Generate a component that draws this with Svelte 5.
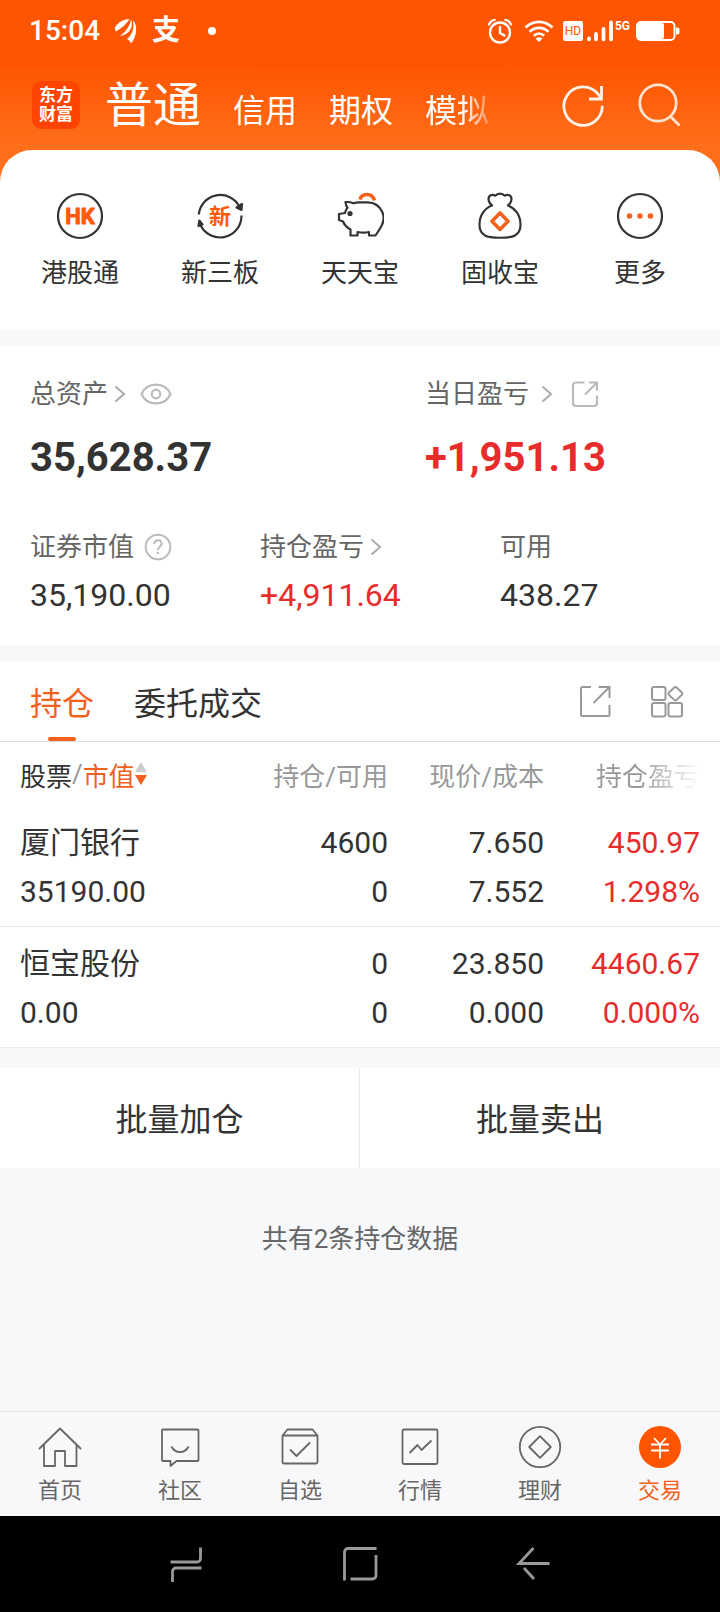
<script lang="ts">
  interface Holding {
    name: string;
    value: string;
    held: string;
    available: string;
    price: string;
    cost: string;
    profit: string;
    rate: string;
  }

  const accounts = ['普通', '信用', '期权', '模拟'];
  const shortcuts = [
    { id: 'hk', label: '港股通' },
    { id: 'neeq', label: '新三板' },
    { id: 'pig', label: '天天宝' },
    { id: 'bag', label: '固收宝' },
    { id: 'more', label: '更多' },
  ];
  const tabs = ['持仓', '委托成交'];
  const holdings: Holding[] = [
    { name: '厦门银行', value: '35190.00', held: '4600', available: '0', price: '7.650', cost: '7.552', profit: '450.97', rate: '1.298%' },
    { name: '恒宝股份', value: '0.00', held: '0', available: '0', price: '23.850', cost: '0.000', profit: '4460.67', rate: '0.000%' },
  ];
  const navItems = [
    { id: 'home', label: '首页' },
    { id: 'community', label: '社区' },
    { id: 'watchlist', label: '自选' },
    { id: 'market', label: '行情' },
    { id: 'wealth', label: '理财' },
    { id: 'trade', label: '交易' },
  ];

  let account = $state('普通');
  let tab = $state('持仓');
  let page = $state('trade');
</script>

{#snippet chevron()}
  <svg class="chevron" width="12" height="18" viewBox="0 0 12 18"><path d="M1.500 1.500 10 9l-8.500 7.500" /></svg>
{/snippet}

<div class="app">
  <div class="hero">
    <div class="status">
      <span class="clock">15:04</span>
      <svg class="wing" width="24" height="26" viewBox="0 0 24 26" fill="#fff">
        <path d="M1 9.500C4 4 9 1.500 15.500 1 12 6.500 8 10 2 13.500 1 12.500.8 11 1 9.500z" />
        <path d="M6 18C12 13.500 16 8 17 1.200c2 5.300.5 10-3 13.300C12 16.300 9 17.800 6 18z" />
        <path d="M13 21c5.500-4.500 7.500-11 6-19 3 3.500 3.800 8 2.800 13-.7 4-2.300 7.500-4.800 10.500C16.300 23.500 15 22 13 21z" />
      </svg>
      <span class="pay">支</span>
      <span class="dot"></span>
      <div class="system">
        <svg class="alarm" width="26" height="26" viewBox="0 0 26 26" fill="none" stroke="#fff" stroke-width="2.300" stroke-linecap="round">
          <circle cx="13" cy="14.500" r="10" />
          <path d="M13 9v6l4.500 2.500M2 6.500C3 4 5 2.300 7.500 1.800M24 6.500C23 4 21 2.300 18.500 1.800" />
        </svg>
        <svg class="wifi" width="30" height="24" viewBox="0 0 30 24" fill="none" stroke="#fff" stroke-width="2.800">
          <path d="M1.500 8.500C9.500 1 20.500 1 28.500 8.500M5.500 12.800c5.500-5.300 13.500-5.300 19 0M9.800 16.800c3.200-3 7.200-3 10.400 0" />
          <path d="M11.500 19.500 15 23l3.500-3.500c-2-1.600-5-1.600-7 0z" fill="#fff" stroke="none" />
        </svg>
        <span class="hd">HD</span>
        <svg class="signal" width="28" height="22" viewBox="0 0 28 22" stroke="#fff" stroke-width="3.800" stroke-linecap="round">
          <path d="M3 18.500v.8M10 14v5.300M17.500 9v10.300M25 2.500v16.800" />
        </svg>
        <span class="net">5G</span>
        <svg width="44" height="20" viewBox="0 0 44 20">
          <rect x="1" y="1" width="37.500" height="18" rx="4" fill="none" stroke="#fff" stroke-width="2" />
          <rect x="2" y="2" width="26" height="16" rx="2" fill="#fff" />
          <path d="M40 6.500h1.500a2 2 0 0 1 2 2v3a2 2 0 0 1-2 2H40z" fill="#fff" />
        </svg>
      </div>
    </div>

    <header>
      <a class="logo" href="#home">东方<br />财富</a>
      <nav class="accounts">
        {#each accounts as item}
          <button class:current={account === item} onclick={() => (account = item)}>{item}</button>
        {/each}
      </nav>
      <button class="head-btn" aria-label="刷新">
        <svg width="44" height="44" viewBox="0 0 44 44" fill="none" stroke="#fff3ea" stroke-width="2.800">
          <path d="M40.300 22.800A19.200 19.200 0 1 1 36 11l3 4" />
          <path d="M39.500 3v13H27" />
        </svg>
      </button>
      <button class="head-btn" aria-label="搜索">
        <svg width="44" height="44" viewBox="0 0 44 44" fill="none" stroke="#ffe3d0" stroke-width="2.800">
          <circle cx="20" cy="20" r="18.200" />
          <path d="m32 33 9.500 9.500" />
        </svg>
      </button>
    </header>

    <div class="shortcuts">
      {#each shortcuts as item}
        <a href={`#${item.id}`}>
          <svg width="48" height="48" viewBox="0 0 48 48" fill="none" stroke="#333" stroke-width="2.200" stroke-linejoin="round">
            {#if item.id === 'hk'}
              <circle cx="24" cy="24" r="22" />
              <text x="24" y="31.500" class="hk">HK</text>
            {:else if item.id === 'neeq'}
              <path d="M2.800 22.500A21.500 21.500 0 0 1 43.500 15M45.500 23.500A21.500 21.500 0 0 1 4.500 33" />
              <path d="m40.500 15.500 5.500-3.500-.5 6zM2.500 34l.8-5.500 3.200 4z" fill="#333" />
              <text x="24" y="31.500" class="xin">新</text>
            {:else if item.id === 'pig'}
              <path d="M23 10.300c-2 .1-4 .5-5.500 1-2.500-1-5-1.500-8-1.200.2 2.500.8 4 2 5.600-1.200 1.700-2 3.200-2.500 5.300l-6 1v6l4 1.500c1.500 3.500 4 6 7.500 8v6h7v-3.500c4 .7 8 .7 11.500 0V43.500h6.500c2-3 4-6 6-9.500 2-4 3-9 1-13.500-2.500-6-8-10.200-15-10.200z" />
              <circle cx="14" cy="21.500" r="2.600" fill="#333" stroke="none" />
              <path d="M24 7.500c1.500-6 12-7.500 14.500 1" stroke="#f2611d" stroke-width="3.600" />
            {:else if item.id === 'bag'}
              <path d="M16 13.500c-4-3-5-9.500-.5-10.500 1.800-.4 3 .3 4 .7C21.500.8 26.500.8 28.500 3.700c1-.4 2.200-1.100 4-.7 4.500 1 3.500 7.500-.5 10.500 7 2.500 12.500 9.500 12.500 19.500 0 5-1.500 8-5.500 10.500-5 3-25 3-30 0C5 41 3.500 38 3.500 33 3.500 23 9 16 16 13.500z" />
              <path d="m24 21 8 8.200-8 8.200-8-8.200z" stroke="#f2611d" stroke-width="3.600" />
            {:else}
              <circle cx="24" cy="24" r="22" />
              <g fill="#f2611d" stroke="none">
                <circle cx="13.500" cy="24" r="2.800" />
                <circle cx="24" cy="24" r="2.800" />
                <circle cx="34.500" cy="24" r="2.800" />
              </g>
            {/if}
          </svg>
          <span>{item.label}</span>
        </a>
      {/each}
    </div>
  </div>

  <section class="assets">
    <div class="totals">
      <div>
        <div class="label">
          <a href="#assets">总资产{@render chevron()}</a>
          <button class="eye" aria-label="隐藏金额">
            <svg width="32" height="22" viewBox="0 0 32 22" fill="none" stroke="#bbb" stroke-width="2.200">
              <path d="M1.500 11C7-1.500 25-1.500 30.500 11 25 23.500 7 23.500 1.500 11z" />
              <circle cx="16" cy="11" r="4.300" />
            </svg>
          </button>
        </div>
        <strong>35,628.37</strong>
      </div>
      <div>
        <div class="label today">
          <a href="#today">当日盈亏{@render chevron()}</a>
          <button aria-label="分享">
            <svg width="28" height="28" viewBox="0 0 28 28" fill="none" stroke="#bbb" stroke-width="2.200">
              <path d="M13.500 2.500H5a3 3 0 0 0-3 3V23a3 3 0 0 0 3 3h18a3 3 0 0 0 3-3v-7.500M18 2.500h8v8M26 2.500 14 14.500" />
            </svg>
          </button>
        </div>
        <strong class="up">+1,951.13</strong>
      </div>
    </div>
    <div class="details">
      <div>
        <div class="label">
          <span>证券市值</span>
          <button aria-label="说明">
            <svg width="28" height="28" viewBox="0 0 28 28" fill="none" stroke="#bbb" stroke-width="2">
              <circle cx="14" cy="14" r="12.300" />
              <path d="M10.300 11c.2-5 7.400-5 7.400-.5 0 3-3.700 3-3.700 6.500M14 18.800v2.200" />
            </svg>
          </button>
        </div>
        <span class="figure">35,190.00</span>
      </div>
      <div>
        <div class="label"><a href="#profit">持仓盈亏{@render chevron()}</a></div>
        <span class="figure up">+4,911.64</span>
      </div>
      <div>
        <div class="label">可用</div>
        <span class="figure">438.27</span>
      </div>
    </div>
  </section>

  <section class="positions">
    <div class="tabs">
      {#each tabs as item}
        <button class="tab" class:active={tab === item} onclick={() => (tab = item)}>{item}</button>
      {/each}
      <div class="tools">
        <button aria-label="分享持仓">
          <svg width="34" height="34" viewBox="0 0 34 34" fill="none" stroke="#999" stroke-width="2">
            <path d="M13 3H4.500A1.500 1.500 0 0 0 3 4.500v26A1.500 1.500 0 0 0 4.500 32H30a1.500 1.500 0 0 0 1.500-1.500V21M20.500 3h11v11M31.500 3 15.500 19" />
          </svg>
        </button>
        <button aria-label="更多功能">
          <svg width="34" height="34" viewBox="0 0 34 34" fill="none" stroke="#999" stroke-width="2" stroke-linejoin="round">
            <rect x="2" y="3" width="13.500" height="13" rx="2" />
            <rect x="2" y="19" width="13.500" height="13.500" rx="2" />
            <rect x="18.500" y="19" width="13.500" height="13.500" rx="2" />
            <path d="m24.200 3.500-5.200 5q-1 1.200 0 2.400l5.200 5q1.200 1 2.400 0l5.200-5q1-1.200 0-2.400l-5.200-5q-1.200-1-2.400 0z" />
          </svg>
        </button>
      </div>
    </div>

    <table>
      <thead>
        <tr>
          <th>
            <button class="sort">
              股票<i>/</i><em>市值</em>
              <svg width="12" height="26" viewBox="0 0 12 26"><path d="m6 1 6 10H0z" fill="#ccc" /><path d="m6 24 6-10H0z" fill="#f2611d" /></svg>
            </button>
          </th>
          <th>持仓/可用</th>
          <th>现价/成本</th>
          <th><span class="fade">持仓盈亏</span></th>
        </tr>
      </thead>
      <tbody>
        {#each holdings as item}
          <tr>
            <td><span>{item.name}</span><span>{item.value}</span></td>
            <td><span>{item.held}</span><span>{item.available}</span></td>
            <td><span>{item.price}</span><span>{item.cost}</span></td>
            <td class="up"><span>{item.profit}</span><span>{item.rate}</span></td>
          </tr>
        {/each}
      </tbody>
    </table>
  </section>

  <div class="batch">
    <button>批量加仓</button>
    <button>批量卖出</button>
  </div>

  <p class="count">共有{holdings.length}条持仓数据</p>

  <nav class="bottom">
    {#each navItems as item}
      <a href={`#${item.id}`} class:active={page === item.id} onclick={() => (page = item.id)}>
        <svg width="44" height="44" viewBox="0 0 44 44" fill="none" stroke="#666" stroke-width="1.800" stroke-linejoin="round">
          {#if item.id === 'home'}
            <path d="M1 24 22 3.500 43 24M6 19.500V41h11V26h10v15h11.500V19.500" />
          {:else if item.id === 'community'}
            <path d="M5 4.500h34.500a1 1 0 0 1 1 1V35a1 1 0 0 1-1 1H18.500l-6 5v-5H5a1 1 0 0 1-1-1V5.500a1 1 0 0 1 1-1z" />
            <path d="M13.500 21.500c3.500 7.500 13.500 7.500 17 0" />
          {:else if item.id === 'watchlist'}
            <path d="M4.500 10.500 9.500 4.500h25l5 6v26.500a1.500 1.500 0 0 1-1.500 1.500H6A1.500 1.500 0 0 1 4.500 37zM4.500 10.500h35M12 24.500l6.500 6.500L32 17.500" />
          {:else if item.id === 'market'}
            <rect x="4.500" y="4.500" width="35" height="34.500" rx="1.500" />
            <path d="m11.500 28 8-8 4 5L33.500 15.500" />
          {:else if item.id === 'wealth'}
            <circle cx="22" cy="22" r="20.200" />
            <path d="m22 11.200 10.800 10.800L22 32.800 11.200 22z" />
          {:else}
            <circle cx="22" cy="22" r="21" fill="#ff5500" stroke="none" />
            <path d="m16 13 6 6.500L28 13M13 19.500h18M13 25.500h18M22 19.500V33.500" stroke="#fff" />
          {/if}
        </svg>
        <span>{item.label}</span>
      </a>
    {/each}
  </nav>

  <div class="keys">
    <button aria-label="最近任务">
      <svg width="36" height="36" viewBox="0 0 36 36"><path d="M2.500 16H29a3.500 3.500 0 0 0 3.500-3.500V1.500M33.500 22H8a3.500 3.500 0 0 0-3.500 3.500V36" /></svg>
    </button>
    <button aria-label="主屏幕">
      <svg width="36" height="36" viewBox="0 0 36 36"><path d="M2.500 34.500V6a3.500 3.500 0 0 1 3.500-3.500h28.500M34 9v20.500a3.500 3.500 0 0 1-3.500 3.500H8.500" /></svg>
    </button>
    <button aria-label="返回">
      <svg width="36" height="36" viewBox="0 0 36 36"><path d="M17.500 2 3 17.500h30.500M8 22l10 11" /></svg>
    </button>
  </div>
</div>

<style>
  :global(body) { margin: 0; background: #f7f8fa; }
  .app { min-height: 100vh; display: flex; flex-direction: column; background: #f7f8fa; color: #333; font-family: Roboto, 'Noto Sans CJK SC', sans-serif; font-size: 26px; }
  button { padding: 0; border: 0; background: none; color: inherit; font: inherit; cursor: pointer; }
  a { color: inherit; text-decoration: none; }
  svg { display: block; flex-shrink: 0; }
  .up { color: #e82c2c; }

  .hero { background: linear-gradient(#ff5500 64px, #ff6e1b 146px); }
  .status { display: flex; align-items: center; height: 60px; padding: 2px 40px 0 29px; box-sizing: border-box; color: #fff; }
  .clock { font-size: 28px; font-weight: 500; line-height: 58px; }
  .wing { margin-left: 14px; }
  .pay { margin-left: 14px; font-size: 28px; font-weight: 700; line-height: 58px; }
  .dot { width: 8px; height: 8px; margin-left: 28px; border-radius: 50%; background: #fff; }
  .system { display: flex; align-items: center; margin-left: auto; }
  .wifi { margin-left: 11px; }
  .hd { width: 20px; margin: 0 3px 0 9px; border-radius: 2px; background: #fff; color: #ff5500; font-size: 12px; line-height: 20px; text-align: center; }
  .net { align-self: flex-start; margin: 0 6px 0 1px; font-size: 12px; font-weight: 700; line-height: 16px; }

  header { display: flex; align-items: center; height: 90px; padding: 0 38px 0 32px; box-sizing: border-box; color: #fff; }
  .logo { width: 48px; height: 48px; padding: 5px 0; box-sizing: border-box; border-radius: 9px; background: #ff4400; font-size: 17px; font-weight: 700; line-height: 19px; text-align: center; flex-shrink: 0; }
  .accounts { display: flex; align-items: baseline; gap: 32px; flex: 1; margin-left: 25px; padding-top: 6px; font-size: 32px; line-height: 64px; white-space: nowrap; }
  .accounts .current { font-size: 48px; }
  .accounts button:last-child { -webkit-mask-image: linear-gradient(90deg, #000 60%, transparent 115%); mask-image: linear-gradient(90deg, #000 60%, transparent 115%); }
  .head-btn { margin-left: 32px; }

  .shortcuts { display: grid; grid-template-columns: repeat(5, 1fr); padding: 42px 10px 37px; border-radius: 32px 32px 0 0; background: #fff; }
  .shortcuts a { display: flex; flex-direction: column; align-items: center; gap: 13px; line-height: 40px; }
  .shortcuts text { stroke: none; fill: #ff5a0a; font-size: 22px; font-weight: 700; text-anchor: middle; }
  .shortcuts .hk { stroke: #ff5a0a; stroke-width: 1; }

  .assets { margin-top: 16px; padding: 28px 30px 22px; background: #fff; }
  .totals { display: grid; grid-template-columns: 395fr 265fr; }
  .details { display: grid; grid-template-columns: 230fr 240fr 190fr; margin-top: 41px; }
  .label { display: flex; align-items: center; gap: 10px; height: 40px; color: #666; line-height: 40px; }
  .label a { display: flex; align-items: center; gap: 6px; }
  .today a { gap: 12px; }
  .today { gap: 18px; }
  .eye { margin-left: 4px; }
  .chevron { fill: none; stroke: #aaa; stroke-width: 2; }
  strong { display: block; margin-top: 16px; font-size: 40px; line-height: 56px; }
  .figure { display: block; padding: 4px 0; font-size: 32px; line-height: 48px; }

  .positions { margin-top: 16px; background: #fff; }
  .tabs { display: flex; align-items: stretch; height: 80px; padding: 0 36px 0 30px; border-bottom: 1px solid #ddd; font-size: 32px; }
  .tab { position: relative; margin-right: 40px; }
  .tab.active { color: #f2611d; }
  .tab.active::after { content: ''; position: absolute; left: 50%; bottom: 0; width: 28px; height: 4px; margin-left: -14px; border-radius: 2px; background: #f2611d; }
  .tools { display: flex; align-items: center; gap: 38px; margin-left: auto; }

  table { width: 100%; border-collapse: separate; border-spacing: 0; table-layout: fixed; }
  th, td { width: 156px; padding: 0; text-align: right; }
  th:first-child, td:first-child { width: auto; padding-left: 20px; text-align: left; }
  th:last-child, td:last-child { padding-right: 20px; }
  th { height: 64px; color: #999; font-weight: 400; }
  td { padding: 12px 0 10px; border-bottom: 1px solid #eaeaea; font-size: 30px; }
  td span { display: block; line-height: 49px; }
  .sort { display: flex; align-items: center; color: #333; }
  .sort i { color: #999; font-style: normal; }
  .sort em { color: #f2611d; font-style: normal; }
  .fade { display: block; -webkit-mask-image: linear-gradient(90deg, #000 60%, transparent); mask-image: linear-gradient(90deg, #000 60%, transparent); }

  .batch { display: grid; grid-template-columns: 1fr 1fr; margin-top: 20px; background: #fff; }
  .batch button { height: 100px; padding-bottom: 2px; font-size: 32px; }
  .batch button:first-child { border-right: 1px solid #eaeaea; }
  .count { flex: 1; margin: 51px 0 0; color: #666; line-height: 40px; text-align: center; }

  .bottom { display: grid; grid-template-columns: repeat(6, 1fr); padding: 13px 0 9px; border-top: 1px solid #e0e2e5; background: #f8f8fa; }
  .bottom a { display: flex; flex-direction: column; align-items: center; gap: 6px; color: #666; font-size: 22px; line-height: 32px; }
  .bottom .active { color: #f2611d; }
  .keys { display: flex; justify-content: center; align-items: center; gap: 138px; height: 96px; background: #000; }
  .keys svg { fill: none; stroke: #999; stroke-width: 2.8; }
</style>
